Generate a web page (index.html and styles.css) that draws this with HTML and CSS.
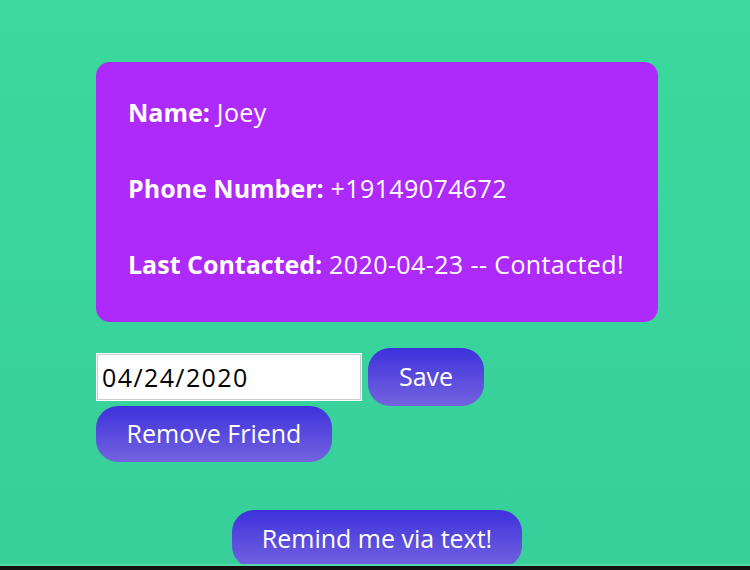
FILE: index.html
```html
<!DOCTYPE html>
<html>
<head>
<meta charset="utf-8">
<link rel="stylesheet" href="styles.css">
</head>
<body>
<div class="page">
  <div class="card">
    <p class="row"><strong>Name:</strong> Joey</p>
    <p class="row"><strong>Phone Number:</strong> +19149074672</p>
    <p class="row"><strong>Last Contacted:</strong> 2020-04-23 -- Contacted!</p>
  </div>
  <div class="controls">
    <div class="line">
      <input class="date" type="text" value="04/24/2020">
      <button class="btn save">Save</button>
    </div>
    <div class="line">
      <button class="btn remove">Remove Friend</button>
    </div>
  </div>
  <div class="remind-wrap">
    <button class="btn remind">Remind me via text!</button>
  </div>
</div>
</body>
</html>
```
FILE: styles.css
```css
html { background: #111; }
body {
  margin: 0;
  font-family: "Open Sans", "Noto Sans", sans-serif;
}
.page {
  height: 566px;
  overflow: hidden;
  border-bottom: 2px solid #55d9aa;
  background: linear-gradient(#3bd99e, #38cf9a);
  padding: 62px 0 0 96px;
  box-sizing: border-box;
}
.card {
  width: 562px;
  height: 260px;
  box-sizing: border-box;
  background: #ae2afb;
  border-radius: 14px;
  padding: 36px 32px 0;
  color: #fff;
}
.row {
  margin: 0 0 48px;
  font-size: 25px;
  line-height: 28px;
  font-weight: 400;
  letter-spacing: 0.4px;
  white-space: nowrap;
}
.row strong { font-weight: 700; letter-spacing: 0; }
.controls {
  margin-top: 26px;
  display: flex;
  flex-direction: column;
}
.line {
  display: flex;
  align-items: center;
}
.date {
  width: 266px;
  height: 48px;
  box-sizing: border-box;
  border: 2px solid #c9cdd1;
  outline: 1px solid #fff;
  outline-offset: -1px;
  font-family: "Open Sans", sans-serif;
  font-size: 25px;
  letter-spacing: 1.4px;
  padding: 0 4px;
  color: #000;
  background: #fff;
  margin: 0;
}
.btn {
  border: none;
  border-radius: 22px;
  color: #fff;
  font-family: "Open Sans", "Noto Sans", sans-serif;
  font-size: 25px;
  background: linear-gradient(#3d31dc, #7463df);
  padding: 0 0 3px;
}
.save {
  width: 116px;
  height: 58px;
  margin-left: 6px;
}
.remove {
  width: 236px;
  height: 56px;
}
.remind-wrap {
  display: flex;
  margin-top: 48px;
  padding-left: 136px;
}
.remind {
  width: 290px;
  height: 58px;
}
```
